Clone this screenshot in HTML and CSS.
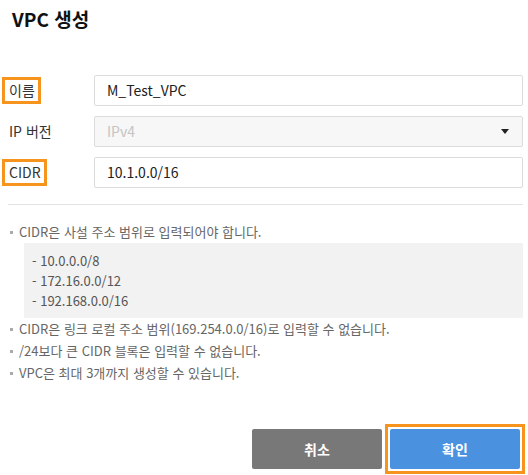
FILE: index.html
```html
<!DOCTYPE html>
<html lang="ko">
<head>
<meta charset="utf-8">
<link rel="stylesheet" href="styles.css">
</head>
<body>
<div class="dialog">
  <h1 class="title">VPC 생성</h1>
  <div class="form">
    <div class="label"><span class="tag hl">이름</span></div>
    <div class="field"><div class="input">M_Test_VPC</div></div>
    <div class="label"><span class="tag">IP 버전</span></div>
    <div class="field"><div class="input select"><span class="ph">IPv4</span><span class="arrow"></span></div></div>
    <div class="label"><span class="tag hl">CIDR</span></div>
    <div class="field"><div class="input">10.1.0.0/16</div></div>
  </div>
  <hr class="divider">
  <ul class="notes">
    <li>CIDR은 사설 주소 범위로 입력되어야 합니다.
      <div class="ranges">
        <div>- 10.0.0.0/8</div>
        <div>- 172.16.0.0/12</div>
        <div>- 192.168.0.0/16</div>
      </div>
    </li>
    <li>CIDR은 링크 로컬 주소 범위(169.254.0.0/16)로 입력할 수 없습니다.</li>
    <li>/24보다 큰 CIDR 블록은 입력할 수 없습니다.</li>
    <li>VPC은 최대 3개까지 생성할 수 있습니다.</li>
  </ul>
  <div class="actions">
    <button class="btn cancel">취소</button>
    <span class="mark"><button class="btn ok">확인</button></span>
  </div>
</div>
</body>
</html>
```
FILE: styles.css
```css
* { box-sizing: border-box; }
html, body {
  margin: 0;
  padding: 0;
  background: #fff;
}
body {
  font-family: "Noto Sans CJK KR", "Noto Sans", sans-serif;
  color: #222;
  width: 528px;
  height: 475px;
  overflow: hidden;
}
.dialog {
  padding: 0 5px 0 2px;
}
.title {
  margin: 0;
  padding: 6px 0 0 10px;
  font-size: 19px;
  font-weight: 700;
  line-height: 26px;
  color: #111;
  height: 75px;
}
.form {
  display: grid;
  grid-template-columns: 92px 1fr;
  row-gap: 10px;
  align-items: center;
}
.label {
  display: flex;
  align-items: center;
}
.tag {
  display: inline-block;
  border: 3px solid transparent;
  padding: 2px 3px 2px 4px;
  font-size: 14px;
  line-height: 17px;
  color: #333;
}
.tag.hl {
  border-color: #f7941d;
}
.input {
  height: 31px;
  border: 1px solid #dcdcdc;
  border-radius: 2px;
  padding: 0 12px;
  font-size: 14px;
  line-height: 29px;
  color: #222;
  background: #fff;
}
.select {
  background: #f7f7f7;
  display: flex;
  align-items: center;
  justify-content: space-between;
  padding-right: 13px;
}
.ph {
  color: #c4c4c4;
}
.arrow {
  width: 0;
  height: 0;
  border-left: 4px solid transparent;
  border-right: 4px solid transparent;
  border-top: 5px solid #222;
}
.divider {
  border: 0;
  border-top: 1px solid #e3e3e3;
  margin: 16px 0 0 6px;
}
.notes {
  list-style: none;
  margin: 16px 0 0;
  padding: 0 0 0 8px;
  font-size: 13px;
  line-height: 22px;
  color: #666;
}
.notes li {
  position: relative;
  padding-left: 9px;
}
.notes li::before {
  content: "";
  position: absolute;
  left: 0;
  top: 10px;
  width: 3px;
  height: 3px;
  background: #aaa;
}
.ranges {
  margin-left: 5px;
  background: #f2f2f2;
  padding: 8px 8px 7px;
  line-height: 20px;
  color: #555;
}
.actions {
  display: flex;
  justify-content: flex-end;
  align-items: center;
  gap: 3px;
  margin: 40px -2px 0 0;
}
.mark {
  display: flex;
  border: 3px solid #f7941d;
  padding: 2px;
}
.btn {
  width: 130px;
  height: 40px;
  border: 0;
  border-radius: 2px;
  font-family: "Noto Sans CJK KR", "Noto Sans", sans-serif;
  font-size: 14px;
  font-weight: 700;
  color: #fff;
}
.cancel {
  background: #787878;
}
.ok {
  background: #4a92e0;
}
```
